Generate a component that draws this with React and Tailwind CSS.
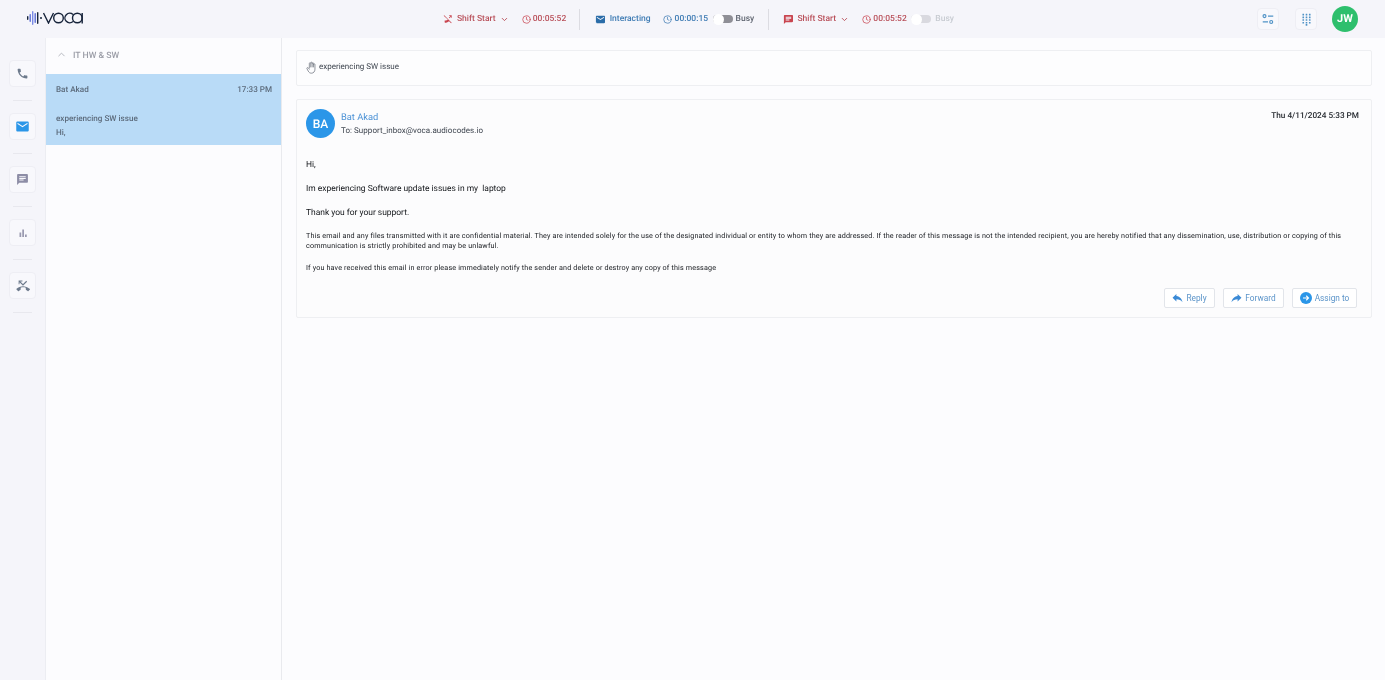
import React from "react";
import { ChevronUp, ChevronDown, Clock } from "lucide-react";

const Phone = ({ className }) => (
  <svg viewBox="0 0 24 24" className={className} fill="currentColor"><path d="M6.6 10.8c1.4 2.8 3.8 5.1 6.6 6.6l2.2-2.2c.3-.3.7-.4 1-.2 1.1.4 2.3.6 3.6.6.6 0 1 .4 1 1V20c0 .6-.4 1-1 1C10.6 21 3 13.4 3 4c0-.6.4-1 1-1h3.5c.6 0 1 .4 1 1 0 1.2.2 2.4.6 3.6.1.3 0 .7-.2 1z" /></svg>
);
const Mail = ({ className }) => (
  <svg viewBox="0 0 24 24" className={className} fill="currentColor"><path d="M20 4H4c-1.1 0-2 .9-2 2v12c0 1.100.9 2 2 2h16c1.100 0 2-.9 2-2V6c0-1.100-.9-2-2-2zm0 4-8 5-8-5V6l8 5 8-5z" /></svg>
);
const Chat = ({ className }) => (
  <svg viewBox="0 0 24 24" className={className} fill="currentColor"><path d="M20 2H4c-1.100 0-2 .9-2 2v18l4-4h14c1.100 0 2-.9 2-2V4c0-1.100-.9-2-2-2zM6 9h12v2H6zm8 5H6v-2h8zm4-6H6V6h12z" /></svg>
);
const Bars = ({ className }) => (
  <svg viewBox="0 0 24 24" className={className} fill="currentColor"><rect x="5" y="11" width="3.500" height="9" /><rect x="10.500" y="5" width="3.500" height="15" /><rect x="16" y="15" width="3.500" height="5" /></svg>
);
const CallMissed = ({ className }) => (
  <svg viewBox="0 0 24 24" className={className} fill="currentColor"><path d="M23.100 16.700C20 13.800 16.200 12.300 12 12.300S4 13.800.9 16.700c-.2.200-.3.400-.3.700s.1.500.3.700l2.500 2.500c.2.200.4.300.7.300.2 0 .5-.1.700-.3.800-.7 1.700-1.300 2.600-1.800.3-.2.600-.5.600-.9v-3.100c1.400-.5 2.900-.7 4.400-.7s3 .2 4.400.7v3.100c0 .4.200.7.600.9.900.5 1.800 1.100 2.600 1.800.2.200.4.300.7.300s.5-.1.700-.3l2.500-2.500c.2-.2.300-.4.300-.7s-.1-.5-.3-.6zM6 5.500l6 6 7-7-1.400-1.400L12 8.700 7.400 4.100H11V2.500H4.500V9H6z" /></svg>
);
const ShiftIcon = ({ className }) => (
  <svg viewBox="0 0 24 24" className={className} fill="currentColor"><path d="M3 3l18 18-1.400 1.400-5-5c-3.600 2.500-7.500 3.600-9.600 3.600-.6 0-1-.4-1-1v-3.500c0-.6.4-1 1-1 1.200 0 2.400-.2 3.600-.6.300-.1.700 0 1 .2l2.100-2.100L1.600 4.400zM20 3l1.400 1.400-6 6-1.400-1.400zM15 3h6v6h-2V5h-4z" /></svg>
);
const Reply = ({ className }) => (
  <svg viewBox="2 4 20 17" className={className} fill="currentColor"><path d="M10 9V5l-7 7 7 7v-4.100c5 0 8.500 1.600 11 5.100-1-5-4-10-11-11z" /></svg>
);
const Forward = ({ className }) => (
  <svg viewBox="2 4 20 17" className={className} fill="currentColor"><path d="M14 9V5l7 7-7 7v-4.100c-5 0-8.500 1.600-11 5.100 1-5 4-10 11-11z" /></svg>
);
const Assign = ({ className }) => (
  <svg viewBox="0 0 24 24" className={className}><circle cx="12" cy="12" r="12" fill="#2b96e8" /><path d="M6 12h11M12.500 7.500 17 12l-4.500 4.500" stroke="#fff" strokeWidth="2.200" fill="none" /></svg>
);
const Sliders = ({ className }) => (
  <svg viewBox="0 0 24 24" className={className} fill="none" stroke="currentColor" strokeWidth="2"><circle cx="6" cy="7" r="2.500" /><path d="M12 7h9M3 17h9" /><circle cx="17.500" cy="17" r="2.500" /></svg>
);
const Dialpad = ({ className }) => (
  <svg viewBox="0 0 24 24" className={className} fill="currentColor">
    {[3, 8, 13, 18, 22].flatMap((y) => [6, 12, 18].map((x) => (y === 22 && x !== 12 ? null : <rect key={`${x}-${y}`} x={x - 1.500} y={y - 1.500} width="3" height="3" rx=".5" />)))}
  </svg>
);
const HandIcon = ({ className }) => (
  <svg viewBox="0 0 20 24" className={className} fill="none" stroke="currentColor" strokeWidth="1.500" strokeLinecap="round" strokeLinejoin="round">
    <path d="M6 13V4.500a1.300 1.300 0 0 1 2.600 0V11M8.600 3.500a1.300 1.300 0 0 1 2.600 0V11M11.200 4.500a1.300 1.300 0 0 1 2.600 0V11M13.800 6.500a1.300 1.300 0 0 1 2.600 0V15c0 4.500-2.600 7.500-6.500 7.500-3 0-4.600-1.500-6-4L1.500 14c-.7-1.300 1-2.500 2.200-1.300L6 15" />
  </svg>
);
const Logo = () => (
  <div className="flex items-center gap-px">
    <svg viewBox="0 0 15 14" className="w-[15px] h-[14px]">
      {[[0,5,4,"#16233a"],[2.500,3,8,"#5c6fd6"],[5,0,14,"#7a8be6"],[7.500,2,10,"#5c6fd6"],[10,1,12,"#16233a"]].map(([x,y,h,c]) => <rect key={x} x={x} y={y} width="1.400" height={h} rx=".7" fill={c} />)}
      <circle cx="14" cy="7" r="1" fill="#16233a" />
    </svg>
    <svg viewBox="0 0 40 12" className="w-[40px] h-[12px]" fill="none" stroke="#16233a" strokeWidth="1.400">
      <path d="M0.500 1l5 10 5-10" />
      <circle cx="15.500" cy="6" r="4.800" />
      <path d="M30 2.500a4.800 4.800 0 1 0 0 7" />
      <circle cx="34.300" cy="6" r="4.800" />
      <path d="M39.200 1v10.500" />
    </svg>
  </div>
);
const Toggle = ({ faded }) => (
  <div className={`relative w-[20px] h-[8px] rounded-full ${faded ? "bg-[#d9d9df]" : "bg-[#8f8f96]"}`}>
    <div className="absolute left-0 top-[-1.500px] w-[11px] h-[11px] rounded-full bg-white" />
  </div>
);
const RailBtn = ({ children }) => (
  <div className="flex flex-col items-center">
    <div className="w-[27px] h-[27px] rounded-[4px] border border-[#eeeef4] bg-[#f8f8fc] flex items-center justify-center">{children}</div>
    <div className="w-[19px] h-px bg-[#e8e8ee] mt-[13px]" />
  </div>
);
const ActionBtn = ({ children, w }) => (
  <button className={`h-[20px] ${w} flex items-center justify-center gap-[3px] rounded-[2px] border border-[#e2e5ea] bg-white text-[8.300px] text-[#5b94c9]`}>{children}</button>
);

export default function App() {
  return (
    <div className="w-[1385px] h-[680px] overflow-hidden bg-[#f5f5fa] flex flex-col font-['Roboto',sans-serif] antialiased will-change-transform [text-rendering:geometricPrecision]">
      <header className="h-[38px] flex items-center shrink-0 relative">
        <div className="ml-[27px] w-[416px] shrink-0 pb-[3px]"><Logo /></div>
        <div className="flex items-center text-[8.500px] w-[511px] shrink-0 font-medium">
          <ShiftIcon className="w-[10px] h-[10px] text-[#c9454f]" />
          <span className="ml-[4px] text-[#b9505a] w-[37px] whitespace-nowrap">Shift Start</span>
          <ChevronDown className="ml-[6px] w-[9px] h-[9px] text-[#b9505a]" strokeWidth={2.500} />
          <Clock className="ml-[13px] w-[9px] h-[9px] text-[#c9454f]" />
          <span className="ml-[2px] text-[#b9505a] w-[33px]">00:05:52</span>
          <div className="ml-[13px] w-px h-[21px] bg-[#dcdce2]" />
          <Mail className="ml-[15px] w-[11px] h-[11px] text-[#2a6ca8]" />
          <span className="ml-[4px] text-[#3f7cb4] w-[39px] whitespace-nowrap">Interacting</span>
          <Clock className="ml-[14px] w-[9px] h-[9px] text-[#3f7cb4]" />
          <span className="ml-[3px] text-[#3f7cb4] w-[32px]">00:00:15</span>
          <div className="ml-[6px]"><Toggle /></div>
          <span className="ml-[3px] w-[18px] text-[#5f6570]">Busy</span>
          <div className="ml-[14px] w-px h-[21px] bg-[#dcdce2]" />
          <Chat className="ml-[14px] w-[11px] h-[11px] text-[#c9454f]" />
          <span className="ml-[4px] text-[#b9505a] w-[37px] whitespace-nowrap">Shift Start</span>
          <ChevronDown className="ml-[6px] w-[9px] h-[9px] text-[#b9505a]" strokeWidth={2.500} />
          <Clock className="ml-[13px] w-[9px] h-[9px] text-[#c9454f]" />
          <span className="ml-[2px] text-[#b9505a] w-[32px]">00:05:52</span>
          <div className="ml-[6px]"><Toggle faded /></div>
          <span className="ml-[4px] text-[#c8ccd2]">Busy</span>
        </div>
        <div className="ml-auto mr-[27px] flex items-center">
          <div className="w-[22px] h-[22px] rounded-[4px] bg-[#f8f8fc] border border-[#eeeef4] flex items-center justify-center"><Sliders className="w-[14px] h-[14px] text-[#4f92c6]" /></div>
          <div className="ml-[16px] w-[22px] h-[22px] rounded-[4px] bg-[#f8f8fc] border border-[#eeeef4] flex items-center justify-center"><Dialpad className="w-[13px] h-[13px] text-[#4f92c6]" /></div>
          <div className="ml-[15px] w-[26px] h-[26px] rounded-full bg-[#2ebf6d] flex items-center justify-center text-white text-[11px] font-bold">JW</div>
        </div>
      </header>
      <div className="flex flex-1 min-h-0">
        <aside className="w-[46px] shrink-0 border-r border-[#ecedf2] pt-[22px] flex flex-col items-center gap-[12px]">
          <RailBtn><Phone className="w-[13px] h-[13px] text-[#6d7a8c]" /></RailBtn>
          <RailBtn><Mail className="w-[15px] h-[15px] text-[#2b96e8]" /></RailBtn>
          <RailBtn><Chat className="w-[13px] h-[13px] text-[#8d8da6]" /></RailBtn>
          <RailBtn><Bars className="w-[12px] h-[12px] text-[#9a9ab0]" /></RailBtn>
          <RailBtn><CallMissed className="w-[14px] h-[14px] text-[#6d7a8c]" /></RailBtn>
        </aside>
        <section className="w-[236px] shrink-0 bg-[#fcfcfe] border-r border-[#e9eaee]">
          <div className="h-[36px] flex items-center text-[8.700px] text-[#9a9ca6] font-medium">
            <ChevronUp className="ml-[10px] mb-[4px] w-[11px] h-[11px] text-[#b0b2ba]" strokeWidth={2} />
            <span className="ml-[6px] mt-[2px]">IT HW &amp; SW</span>
          </div>
          <div className="h-[71px] bg-[#b9dbf7] px-[10px] text-[8.100px] text-[#5c6b7c] font-medium">
            <div className="flex justify-between pt-[9px] leading-[12px]"><span>Bat Akad</span><span className="mr-[-1px]">17:33 PM</span></div>
            <div className="mt-[17px] leading-[12px]">experiencing SW issue</div>
            <div className="mt-[2px] leading-[12px]">Hi,</div>
          </div>
        </section>
        <main className="flex-1 min-w-0 bg-[#fcfcfe] pt-[12px] pl-[14px] pr-[13px]">
          <div className="h-[36px] border border-[#eeeff2] rounded-[2px] bg-[#fdfdfe] flex items-center pl-[9px] pb-[2px] text-[8px] text-[#3f4650]">
            <HandIcon className="w-[11px] h-[13px] text-[#777c86]" />
            <span className="ml-[2px]">experiencing SW issue</span>
          </div>
          <div className="mt-[13px] h-[219px] border border-[#eeeff2] rounded-[2px] bg-[#fcfcfd] pt-[9px] px-[9px] flex flex-col">
            <div className="flex justify-between">
              <div className="flex">
                <div className="w-[29px] h-[29px] rounded-full bg-[#2b96e8] flex items-center justify-center text-white text-[12px] font-medium">BA</div>
                <div className="ml-[6px] pt-[2px]">
                  <div className="text-[9.300px] leading-[14px] text-[#4c92d6]">Bat Akad</div>
                  <div className="text-[8px] leading-[12px] text-[#3f4650] tracking-[0.05px]">To: Support_inbox@voca.audiocodes.io</div>
                </div>
              </div>
              <div className="text-[8.200px] text-[#24282e] mr-[3px] mt-[1px] leading-[12px] font-medium">Thu 4/11/2024 5:33 PM</div>
            </div>
            <div className="mt-[21px] text-[8.450px] text-[#111418] leading-[12px] whitespace-pre">Hi,</div>
            <div className="mt-[12px] text-[8.450px] text-[#111418] leading-[12px] whitespace-pre">Im experiencing Software update issues in my  laptop</div>
            <div className="mt-[12px] text-[8.450px] text-[#111418] leading-[12px]">Thank you for your support.</div>
            <div className="mt-[12px] text-[7.200px] text-[#16191e] leading-[10px] tracking-[0.15px]">This email and any files transmitted with it are confidential material. They are intended solely for the use of the designated individual or entity to whom they are addressed. If the reader of this message is not the intended recipient, you are hereby notified that any dissemination, use, distribution or copying of this communication is strictly prohibited and may be unlawful.</div>
            <div className="mt-[12px] text-[7.200px] text-[#16191e] leading-[10px] tracking-[0.15px]">If you have received this email in error please immediately notify the sender and delete or destroy any copy of this message</div>
            <div className="mt-auto mb-[9px] flex justify-end gap-[8px] mr-[5px]">
              <ActionBtn w="w-[51px]"><Reply className="w-[11px] h-[10px] text-[#3a8ad6]" />Reply</ActionBtn>
              <ActionBtn w="w-[61px]"><Forward className="w-[11px] h-[10px] text-[#3a8ad6]" />Forward</ActionBtn>
              <ActionBtn w="w-[65px]"><Assign className="w-[12px] h-[12px]" />Assign to</ActionBtn>
            </div>
          </div>
        </main>
      </div>
    </div>
  );
}
